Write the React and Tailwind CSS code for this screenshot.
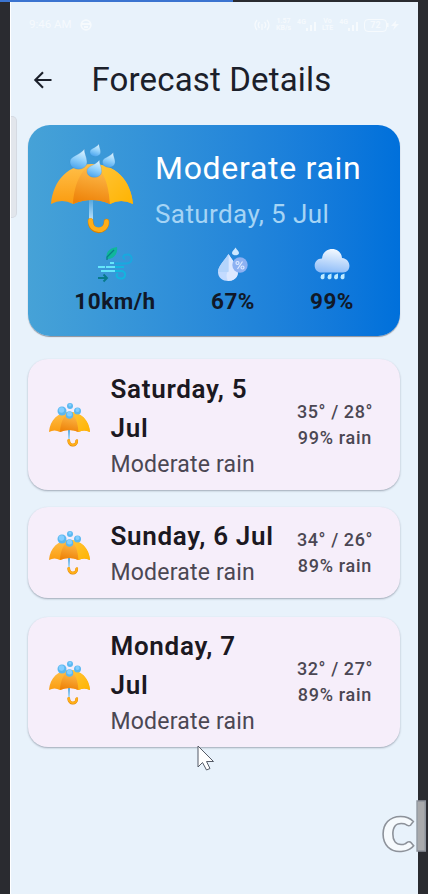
import React from "react";

function Drop({ x, y, s }) {
  return (
    <path
      transform={`translate(${x} ${y}) scale(${s})`}
      d="M14.500 0C14 4 17 8 17 13C17 22.500 0 22.500 0 13C0 6.500 9 7 14.500 0Z"
      fill="url(#drop)"
      stroke="#3b86c4"
      strokeOpacity=".45"
      strokeWidth=".6"
    />
  );
}

function Defs() {
  return (
    <svg width="0" height="0" className="absolute" aria-hidden="true">
      <defs>
        <linearGradient id="canopy" x1="0" y1="0" x2="0" y2="1">
          <stop offset="0" stopColor="#ffc04a" />
          <stop offset="1" stopColor="#fb9c10" />
        </linearGradient>
        <linearGradient id="canopyMid" x1=".6" y1="0" x2=".4" y2="1">
          <stop offset="0" stopColor="#ffc052" />
          <stop offset="1" stopColor="#ee8208" />
        </linearGradient>
        <linearGradient id="canopyRight" x1="0" y1="0" x2="1" y2="1">
          <stop offset="0" stopColor="#ffc63f" />
          <stop offset="1" stopColor="#ffb300" />
        </linearGradient>
        <linearGradient id="drop" x1=".7" y1="0" x2=".4" y2="1">
          <stop offset="0" stopColor="#e2f5ff" />
          <stop offset=".5" stopColor="#93d2fc" />
          <stop offset="1" stopColor="#4ba5ee" />
        </linearGradient>
        <linearGradient id="pole" x1="0" y1="0" x2="0" y2="1">
          <stop offset="0" stopColor="#4fa3dc" />
          <stop offset="1" stopColor="#bfe6ff" />
        </linearGradient>
        <linearGradient id="cloud" x1=".6" y1="0" x2=".4" y2="1">
          <stop offset="0" stopColor="#f5faff" />
          <stop offset="1" stopColor="#8fbdf8" />
        </linearGradient>
      </defs>
    </svg>
  );
}

function Canopy() {
  return (
    <g>
      <path d="M38 54h4v24h-4z" fill="url(#pole)" />
      <path d="M39.500 77C39.500 90 56 89 55.500 77.500" fill="none" stroke="#d98200" strokeWidth="5.500" strokeLinecap="round" />
      <path d="M39.500 76.500C39.500 89 56 88.500 55.500 77.500" fill="none" stroke="#ffae18" strokeWidth="4.600" strokeLinecap="round" />
      <path d="M0 60C2 36 18 20 41 20C64 20 80 36 82 60Q70 54 59 60Q41 52 22 60Q11 54 0 60Z" fill="url(#canopy)" />
      <path d="M22 60C23 41 30 25 41 20C53 25 58 41 59 60Q41 52 22 60Z" fill="url(#canopyMid)" />
      <path d="M41 20C64 20 80 36 82 60Q70 54 59 60C58 41 53 25 41 20Z" fill="url(#canopyRight)" />
    </g>
  );
}

function Umbrella() {
  return (
    <svg viewBox="0 0 82 90" className="h-[90px] w-[82px] shrink-0">
      <Canopy />
      <Drop x={19} y={5} s={1} />
      <Drop x={39} y={0} s={0.62} />
      <Drop x={51.500} y={8.500} s={0.74} />
      <Drop x={36} y={16} s={0.86} />
    </svg>
  );
}

function SmallUmbrella() {
  return (
    <svg viewBox="0 0 82 90" className="h-[45px] w-[41px] shrink-0">
      <Canopy />
      <g fill="#5bb8f0">
        <circle cx="26" cy="18" r="9" />
        <circle cx="42" cy="8" r="6" />
        <circle cx="57" cy="18" r="7" />
        <circle cx="41" cy="26" r="7.500" />
      </g>
      <g fill="#84ceff">
        <circle cx="25" cy="16" r="5.500" />
        <circle cx="42" cy="6" r="3" />
        <circle cx="57" cy="16" r="4" />
        <circle cx="41" cy="24" r="5" />
      </g>
    </svg>
  );
}

function WindIcon() {
  return (
    <svg viewBox="0 0 36 36" className="h-9 w-9" fill="none">
      <path d="M10 12C8 5 13 1 20 0C21 7 17 12 10 12Z" fill="#10b79b" />
      <path d="M17 3L10 10V13" stroke="#087f85" strokeWidth="1.300" />
      <path d="M18 16.500H29C37 16.500 36 7 30 7.500C26 7.500 25 11 28 12" stroke="#18a9df" strokeWidth="1.900" />
      <path d="M18 24H24.500C30 24.500 29 32 23.500 31.500C20 31.500 18 28 21 26.500M18 20H27" stroke="#13b5df" strokeWidth="1.900" />
      <path d="M13 16H17M1 20H8M9 20H18M4 24H18" stroke="#65e5fa" strokeWidth="1.900" />
      <path d="M1 31H9.500M6.500 27.500L10 31L6.500 34.500" stroke="#087b8b" strokeWidth="1.900" />
    </svg>
  );
}

function HumidityIcon() {
  return (
    <svg viewBox="0 0 32 36" className="h-9 w-8">
      <path d="M11.500 7C15 13 21 19 21 25C21 37 1 37 1 25C1 19 8 13 11.500 7Z" fill="#c3dbff" />
      <path d="M11.500 7C15 13 21 19 21 25C21 31 16 34 11 34C9 30 9 26 11.500 24Z" fill="#dce8ff" />
      <path d="M11.500 7C8 13 1 19 1 25H11.500Z" fill="#b4d4fb" />
      <path d="M18.500 0.500C20 3 22 4 22 6C22 9 15 9 15 6C15 4 17 3 18.500 0.500Z" fill="#cce8ff" />
      <circle cx="23" cy="18" r="7.700" fill="#8cb1f2" />
      <g fill="none" stroke="#dceaff" strokeWidth="1.200">
        <path d="M25.500 14.500L20.500 22" />
        <circle cx="20.500" cy="16" r="1.500" />
        <circle cx="25.500" cy="20.500" r="1.500" />
      </g>
    </svg>
  );
}

function CloudIcon() {
  return (
    <svg viewBox="0 0 36 36" className="h-9 w-9">
      <path d="M8 25.500C-2 25.500 -1.500 11.500 8 11.500C9 -1 27 -1 28 11C38 12 37.500 25.500 29 25.500Z" fill="url(#cloud)" />
      <path d="M7 28l3.500-1.500v4a2 2 0 1 1-3.500-1.500zM14 28l3.500-1.500v4a2 2 0 1 1-3.500-1.500zM20.500 28l3.500-1.500v4a2 2 0 1 1-3.500-1.500zM27 28l3.500-1.500v4a2 2 0 1 1-3.500-1.500z" fill="#bfeaff" />
    </svg>
  );
}

function Stat({ icon, value }) {
  return (
    <div className="flex flex-col items-center">
      {icon}
      <span className="mt-[3px] text-[22.500px] leading-[30px] font-bold tracking-[0.500px] whitespace-nowrap text-[#101828]">{value}</span>
    </div>
  );
}

function StatusBar() {
  return (
    <div className="flex h-[46px] items-center justify-between pr-[18px] pl-[18px] text-white/60">
      <div className="flex items-center gap-2">
        <span className="text-[11.500px]">9:46 AM</span>
        <svg viewBox="0 0 12 12" className="h-3 w-3" fill="none" stroke="currentColor" strokeWidth="1.800">
          <circle cx="6" cy="6" r="4.800" />
          <path d="M2 5h8M4 8h4" />
        </svg>
      </div>
      <div className="flex items-center gap-[6px] text-[7px] leading-[7px] font-bold">
        <svg viewBox="0 0 16 12" className="h-3 w-4" fill="none" stroke="currentColor" strokeWidth="1.300">
          <path d="M3 1Q-1 6 3 11M13 1Q17 6 13 11M5.500 3Q3 6 5.500 9M10.500 3Q13 6 10.500 9M8 5v6" />
        </svg>
        <span className="text-center">1.57<br />KB/s</span>
        <Signal label="4G" />
        <span className="text-center">Vo<br />LTE</span>
        <Signal label="4G" />
        <span className="flex items-center">
          <span className="flex h-[13px] w-[23px] items-center justify-center rounded-[4px] border border-white/60 text-[9px]">72</span>
          <svg viewBox="0 0 13 12" className="h-3 w-[13px]" fill="currentColor">
            <path d="M0 4h1.500v4H0zM9.500 1L4 7h3.500L6 11l6-6H8.500z" />
          </svg>
        </span>
      </div>
    </div>
  );
}

function Signal({ label }) {
  return (
    <span className="flex h-3">
      <span>{label}</span>
      <svg viewBox="0 0 10 12" className="h-3 w-[10px]" fill="currentColor">
        <path d="M0 9h2v3H0zM4 6h2v6H4zM8 3h2v9H8z" />
      </svg>
    </span>
  );
}

function DayCard({ day, high, low, rain, className }) {
  return (
    <div className={`flex items-center rounded-[20px] bg-[#f6eefa] pr-[27px] pl-[21px] shadow-[0_1px_2px_rgba(40,50,70,0.38)] ${className}`}>
      <SmallUmbrella />
      <div className="ml-[20.500px] w-[169px] shrink-0 pt-[2px]">
        <div className="text-[26px] leading-[39px] font-semibold tracking-[0.700px] text-[#1b1821]">{day}</div>
        <div className="text-[23px] leading-[34px] tracking-[0.200px] whitespace-nowrap text-[#4b4753]">Moderate rain</div>
      </div>
      <div className="flex flex-1 flex-col items-end text-[18px] leading-[26px] font-medium tracking-[0.600px] whitespace-nowrap text-[#4b4753]">
        <span>{high}° / {low}°</span>
        <span className="pr-px tracking-[0.700px]">{rain}% rain</span>
      </div>
    </div>
  );
}

export default function App() {
  return (
    <div className="relative h-[894px] w-[428px] overflow-hidden bg-[#2a2b30] pl-[10px] font-['Roboto',sans-serif]">
      <Defs />
      <div className="absolute top-0 left-0 h-[2px] w-[233px] bg-[#3b74d0]" />
      <main className="mt-[2px] flex h-[892px] w-[408px] flex-col border-l border-white bg-[#e8f2fb]">
        <StatusBar />
        <header className="flex h-[77px] items-center pb-[13px] pl-[22px]">
          <svg viewBox="0 0 20 20" className="h-5 w-5" fill="none" stroke="#1b202a" strokeWidth="2.100">
            <path d="M18.500 10H2.500M10 2.200L2.300 10L10 17.800" />
          </svg>
          <h1 className="ml-[38.500px] text-[33px] leading-[44px] tracking-[0.160px] whitespace-nowrap text-[#1b202a]">Forecast Details</h1>
        </header>

        <section className="mx-[17px] h-[211px] w-[372px] rounded-[22px] bg-linear-to-r from-[#46a2d7] to-[#0070db] pt-[19px] shadow-[0_1px_1px_rgba(80,80,90,0.6)]">
          <div className="flex pl-[23px]">
            <Umbrella />
            <div className="ml-[22px] flex flex-col whitespace-nowrap">
              <span className="text-[32px] leading-[49px] tracking-[0.700px] text-white">Moderate rain</span>
              <span className="text-[26px] leading-[43px] tracking-[0.400px] text-[#a5d4f5]">Saturday, 5 Jul</span>
            </div>
          </div>
          <div className="mt-[11px] flex pl-[46px]">
            <div className="w-[82px]"><Stat icon={<WindIcon />} value="10km/h" /></div>
            <div className="ml-[54px] w-[46px]"><Stat icon={<HumidityIcon />} value="67%" /></div>
            <div className="ml-[53px] w-[46px]"><Stat icon={<CloudIcon />} value="99%" /></div>
          </div>
        </section>

        <section className="mx-[17px] mt-[23px] flex w-[372px] flex-col">
          <DayCard day="Saturday, 5 Jul" high={35} low={28} rain={99} className="h-[131px]" />
          <DayCard day="Sunday, 6 Jul" high={34} low={26} rain={89} className="mt-[17px] h-[91px]" />
          <DayCard day="Monday, 7 Jul" high={32} low={27} rain={89} className="mt-[19px] h-[130px]" />
        </section>
      </main>

      <div className="absolute top-[116px] left-[11px] h-[102px] w-[6px] rounded-r-[5px] border border-l-0 border-[#d5dae2] bg-[#e2e6ec]" />
      <svg viewBox="0 0 18 26" className="absolute top-[745px] left-[197px] h-[26px] w-[18px]">
        <path d="M1 1V22L5.500 17.500L9.500 25L13 23.500L9.500 16.500H16.500Z" fill="#fff" stroke="#555b66" strokeWidth="1" />
      </svg>
      <div className="absolute top-[786px] left-[381px] flex font-['Lato',sans-serif] text-[66px] leading-[80px] text-white/60 [-webkit-text-stroke:1.500px_#8d929a]">
        <span className="inline-block w-[32px] origin-left scale-x-[1.050] font-black">c</span>
        <span className="inline-block w-[15px] font-bold">l</span>
      </div>
    </div>
  );
}
